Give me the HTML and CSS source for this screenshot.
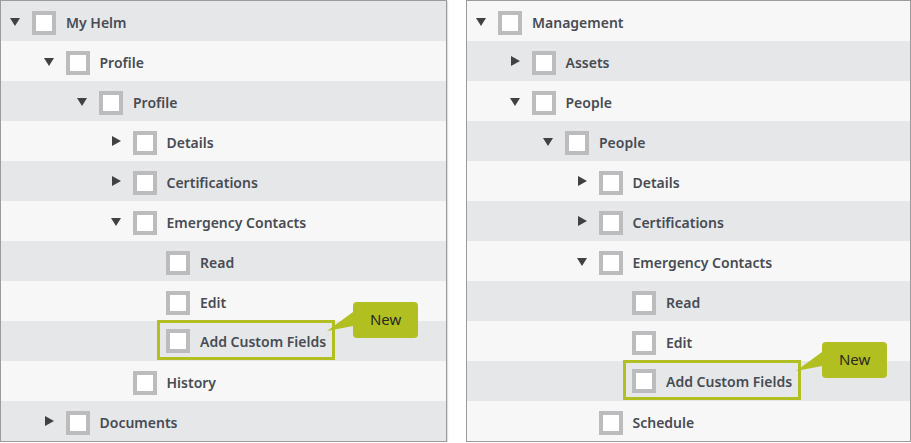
FILE: index.html
```html
<!DOCTYPE html>
<html lang="en">
<head>
    <meta charset="UTF-8">
    <meta name="viewport" content="width=device-width, initial-scale=1.0">
    <title>Permissions Tree</title>
    <link rel="stylesheet" href="styles.css">
</head>
<body>
    <div class="trees">

        <ul class="tree tree-dark-first">
            <li class="node lvl-0"><span class="toggle open"></span><span class="check"></span><span class="label">My Helm</span></li>
            <li class="node lvl-1"><span class="toggle open"></span><span class="check"></span><span class="label">Profile</span></li>
            <li class="node lvl-2"><span class="toggle open"></span><span class="check"></span><span class="label">Profile</span></li>
            <li class="node lvl-3"><span class="toggle closed"></span><span class="check"></span><span class="label">Details</span></li>
            <li class="node lvl-3"><span class="toggle closed"></span><span class="check"></span><span class="label">Certifications</span></li>
            <li class="node lvl-3"><span class="toggle open"></span><span class="check"></span><span class="label">Emergency Contacts</span></li>
            <li class="node lvl-4"><span class="toggle"></span><span class="check"></span><span class="label">Read</span></li>
            <li class="node lvl-4"><span class="toggle"></span><span class="check"></span><span class="label">Edit</span></li>
            <li class="node lvl-4">
                <span class="toggle"></span>
                <span class="new-item">
                    <span class="check"></span><span class="label">Add Custom Fields</span>
                    <span class="callout">
                        <svg class="callout-tail" width="26" height="20" viewBox="0 0 26 20"><polygon points="26,0 0,19 26,14"/></svg>
                        New
                    </span>
                </span>
            </li>
            <li class="node lvl-3"><span class="toggle"></span><span class="check"></span><span class="label">History</span></li>
            <li class="node lvl-1"><span class="toggle closed"></span><span class="check"></span><span class="label">Documents</span></li>
        </ul>

        <ul class="tree tree-light-first">
            <li class="node lvl-0"><span class="toggle open"></span><span class="check"></span><span class="label">Management</span></li>
            <li class="node lvl-1"><span class="toggle closed"></span><span class="check"></span><span class="label">Assets</span></li>
            <li class="node lvl-1"><span class="toggle open"></span><span class="check"></span><span class="label">People</span></li>
            <li class="node lvl-2"><span class="toggle open"></span><span class="check"></span><span class="label">People</span></li>
            <li class="node lvl-3"><span class="toggle closed"></span><span class="check"></span><span class="label">Details</span></li>
            <li class="node lvl-3"><span class="toggle closed"></span><span class="check"></span><span class="label">Certifications</span></li>
            <li class="node lvl-3"><span class="toggle open"></span><span class="check"></span><span class="label">Emergency Contacts</span></li>
            <li class="node lvl-4"><span class="toggle"></span><span class="check"></span><span class="label">Read</span></li>
            <li class="node lvl-4"><span class="toggle"></span><span class="check"></span><span class="label">Edit</span></li>
            <li class="node lvl-4">
                <span class="toggle"></span>
                <span class="new-item new-item-wide">
                    <span class="check"></span><span class="label">Add Custom Fields</span>
                    <span class="callout">
                        <svg class="callout-tail" width="26" height="20" viewBox="0 0 26 20"><polygon points="26,0 0,19 26,14"/></svg>
                        New
                    </span>
                </span>
            </li>
            <li class="node lvl-3"><span class="toggle"></span><span class="check"></span><span class="label">Schedule</span></li>
        </ul>

    </div>
</body>
</html>
```

FILE: styles.css
```css
body {
    font-family: "Noto Sans", "Open Sans", sans-serif;
    margin: 0;
    background: #fff;
}
.trees {
    display: flex;
    gap: 19px;
}
.tree {
    list-style: none;
    margin: 0;
    padding: 0;
    border: 1px solid #9b9b9b;
    box-shadow: 1px 1px 1px rgba(0, 0, 0, 0.12);
}
.tree-dark-first {
    width: 445px;
}
.tree-light-first {
    width: 443px;
}
.tree-dark-first .node:nth-child(odd),
.tree-light-first .node:nth-child(even) {
    background-color: #e6e7e9;
}
.tree-dark-first .node:nth-child(even),
.tree-light-first .node:nth-child(odd) {
    background-color: #f7f7f7;
}
.node {
    display: flex;
    align-items: center;
    height: 40px;
    box-sizing: border-box;
    padding-top: 3px;
    padding-left: 4px;
}
.lvl-1 { padding-left: 37.5px; }
.lvl-2 { padding-left: 71px; }
.lvl-3 { padding-left: 104.5px; }
.lvl-4 { padding-left: 138px; }

.toggle {
    width: 20px;
    margin-right: 7px;
    display: flex;
    justify-content: center;
    flex-shrink: 0;
}
.toggle.open::before {
    content: "";
    border-left: 5.5px solid transparent;
    border-right: 5.5px solid transparent;
    border-top: 8px solid #3f4143;
    margin-top: -2px;
}
.toggle.closed::before {
    content: "";
    border-top: 5px solid transparent;
    border-bottom: 5px solid transparent;
    border-left: 9px solid #3f4143;
    margin-top: -3px;
    margin-left: 1px;
}
.check {
    width: 24px;
    height: 24px;
    box-sizing: border-box;
    border: 4px solid #bcbcbe;
    background: #fff;
    margin-right: 10px;
    flex-shrink: 0;
}
.label {
    font-size: 14px;
    font-weight: 600;
    color: #474c53;
    white-space: nowrap;
}
.new-item {
    position: relative;
    display: flex;
    align-items: center;
    align-self: flex-start;
    height: 40px;
    box-sizing: border-box;
    margin-left: -9px;
    margin-top: -4px;
    padding: 2px 6px 0;
    border: 3px solid #b1bf21;
}
.callout {
    position: absolute;
    left: calc(100% + 21px);
    top: -21px;
    width: 65px;
    height: 36px;
    line-height: 35px;
    text-align: center;
    background: #b1bf21;
    border-radius: 4px;
    font-size: 15px;
    color: #2a2a22;
}
.new-item-wide .callout {
    left: calc(100% + 24px);
}
.callout-tail {
    position: absolute;
    right: 100%;
    top: 10px;
    fill: #b1bf21;
}
```
